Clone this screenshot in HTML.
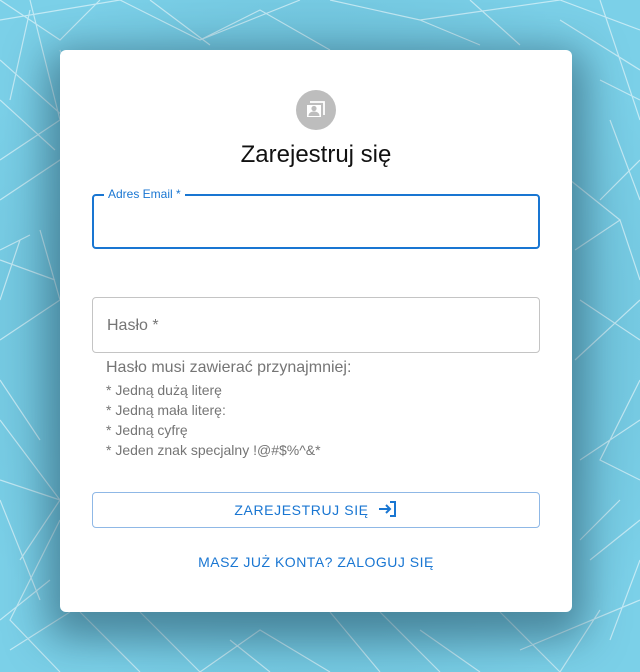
<!DOCTYPE html>
<html><head><meta charset="utf-8"><style>
html,body{margin:0;padding:0}
body{width:640px;height:672px;overflow:hidden;position:relative;background:#78cbe3;font-family:"Liberation Sans",Arial,sans-serif}
#bg{position:absolute;left:0;top:0}
.card{position:absolute;left:60px;top:50px;width:512px;height:562px;background:#fff;border-radius:6px;box-shadow:0 14px 40px 14px rgba(30,70,90,.5)}
.av{position:absolute;left:236px;top:40px;width:40px;height:40px;border-radius:50%;background:#bdbdbd}
h1{position:absolute;left:0;width:512px;top:91px;margin:0;text-align:center;font-weight:400;font-size:24px;color:#111}
.f1{position:absolute;left:32px;top:144px;width:444px;height:51px;border:2px solid #1976d2;border-radius:4px}
.f1 span{position:absolute;left:10px;top:-9px;background:#fff;padding:0 4px;font-size:12px;color:#1976d2}
.f2{position:absolute;left:32px;top:247px;width:446px;height:54px;border:1px solid #c4c4c4;border-radius:4px}
.f2 span{position:absolute;left:14px;top:19px;font-size:16px;color:#757575}
.help{position:absolute;left:46px;top:309px;color:#757575}
.help .h{font-size:16px;margin-bottom:3px}
.help div.l{font-size:14px;line-height:20px}
.btn{position:absolute;left:32px;top:442px;width:446px;height:34px;border:1px solid #8fb8e6;border-radius:4px;color:#1976d2;font-size:14px;letter-spacing:.6px;text-align:center;line-height:35px}
.link{position:absolute;left:0;width:512px;top:504px;text-align:center;color:#1976d2;font-size:14px;letter-spacing:.5px}
</style></head><body>
<svg id="bg" width="640" height="672" stroke="rgba(255,255,255,.55)" stroke-width="1.2" fill="none">
<defs><radialGradient id="g" cx="50%" cy="50%" r="60%"><stop offset="0" stop-color="#5aa9c2"/><stop offset="1" stop-color="#7bd0e8"/></radialGradient></defs>
<rect width="640" height="672" fill="url(#g)" stroke="none"/>
<path d="M0 20L120 0M0 60L90 140L0 200M30 0L60 120L0 160M120 0L200 40L300 0M200 40L260 10L330 50M330 0L420 20L560 0M420 20L480 45M560 0L640 30M560 20L640 70M600 0L640 120M20 240L0 300M40 230L60 300L0 340M30 235L0 250M50 580L0 620M0 420L60 500L20 560M60 500L0 480M0 380L40 440M60 520L10 620L60 672M80 612L140 672M140 612L200 672L260 630L330 672M330 612L380 672M420 630L480 672M500 612L560 672M520 650L640 600M600 610L560 672M610 640L640 560M590 560L640 520M580 460L640 420M575 360L640 300M575 250L620 220L640 280M600 200L640 160M620 220L570 180M610 120L640 200M30 10L10 100M90 140L60 50M0 100L55 150M640 380L600 460L640 480M620 500L580 540M150 0L210 45M0 0L60 40L100 0M470 0L520 45M0 500L40 600M10 650L70 612M380 612L440 672M230 640L270 672M600 80L640 100M580 300L640 340M0 260L55 280"/>
</svg>
<div class="card">
 <div class="av"><svg width="40" height="40" viewBox="0 0 40 40"><path d="M14 12h14v13" fill="none" stroke="#fff" stroke-width="1.8"/><rect x="11" y="15" width="14" height="12" fill="#fff"/><circle cx="18" cy="18.5" r="2.6" fill="#bdbdbd"/><path d="M12.5 26c0-3 2.5-4.5 5.5-4.5s5.5 1.5 5.5 4.5z" fill="#bdbdbd"/></svg></div>
 <h1>Zarejestruj się</h1>
 <div class="f1"><span>Adres Email *</span></div>
 <div class="f2"><span>Hasło *</span></div>
 <div class="help"><div class="h">Hasło musi zawierać przynajmniej:</div>
  <div class="l">* Jedną dużą literę</div><div class="l">* Jedną mała literę:</div><div class="l">* Jedną cyfrę</div><div class="l">* Jeden znak specjalny !@#$%^&amp;*</div></div>
 <div class="btn">ZAREJESTRUJ SIĘ&nbsp;&nbsp;<svg width="20" height="18" viewBox="0 0 20 18" style="vertical-align:-3px" fill="none" stroke="#1976d2" stroke-width="2"><path d="M1 9h11M8 5l4 4-4 4M12 2h5v14h-5"/></svg></div>
 <div class="link">MASZ JUŻ KONTA? ZALOGUJ SIĘ</div>
</div>
</body></html>
